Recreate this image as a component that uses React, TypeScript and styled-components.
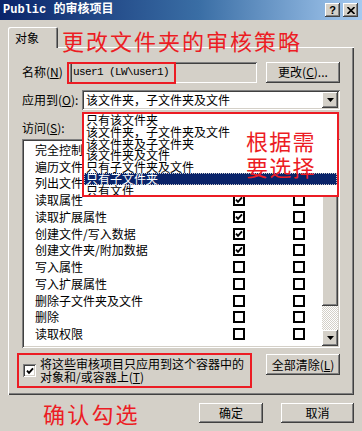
import React from "react";
import styled, { createGlobalStyle } from "styled-components";

const UI = `"Noto Sans CJK SC", "Liberation Sans", sans-serif`;
const RED = "#ec1c24";

const GlobalStyle = createGlobalStyle`
  html, body { margin: 0; padding: 0; background: #d4d0c8; }
  body {
    width: 362px; height: 431px; overflow: hidden;
    font-family: ${UI}; font-size: 12px; color: #000;
  }
`;

const Window = styled.div`
  width: 362px; height: 431px; display: flex; flex-direction: column;
  background: #d4d0c8; position: relative;
`;

const TitleBar = styled.div`
  height: 20px; flex: none; display: flex; align-items: center;
  padding: 0 4px 0 3px; box-sizing: border-box;
  background: linear-gradient(to right, #0a246a 0%, #3a6ea5 55%, #a6caf0 100%);
`;

const TitleText = styled.div`
  flex: 1; color: #fff; font-weight: bold; font-size: 12px; line-height: 20px;
  font-family: "Liberation Mono", "Noto Sans CJK SC", monospace; white-space: pre;
`;

const CaptionButtons = styled.div`
  display: flex; gap: 3px;
`;

const CaptionButton = styled.div`
  width: 15px; height: 14px; box-sizing: border-box; background: #d4d0c8;
  display: flex; align-items: center; justify-content: center;
  box-shadow: inset -1px -1px #404040, inset 1px 1px #fff, inset -2px -2px #808080;
  font-family: "Liberation Sans", sans-serif; font-weight: bold; font-size: 11px; line-height: 14px;
`;

const Body = styled.div`
  flex: 1; display: flex; flex-direction: column; padding: 7px 8px 0 8px;
`;

const TabStrip = styled.div`
  height: 20px; display: flex; align-items: flex-start; position: relative; z-index: 2;
`;

const Tab = styled.div`
  width: 50px; height: 21px; box-sizing: border-box; background: #d4d0c8;
  padding: 4px 0 0 7px; line-height: 14px;
  box-shadow: inset 1px 1px #fff, inset -1px 0 #404040, inset -2px 0 #808080;
  border-top-left-radius: 2px; border-top-right-radius: 2px;
`;

const Annotation = styled.div<{ $size?: number; $spacing?: number }>`
  color: ${RED}; font-family: ${UI}; font-weight: 400;
  font-size: ${(p) => p.$size ?? 22}px; letter-spacing: ${(p) => p.$spacing ?? 2}px;
  white-space: nowrap; pointer-events: none;
`;

const TitleNote = styled(Annotation)`
  position: absolute; left: 54px; top: 2px; line-height: 22px; z-index: 20;
`;

const ListNote = styled(Annotation)`
  position: absolute; left: 162px; top: 13px; line-height: 26px; z-index: 20;
`;

const FooterNote = styled(Annotation)`
  line-height: 22px; margin: -1px 0 0 35px;
`;

const Panel = styled.div`
  width: 346px; height: 348px; box-sizing: border-box; position: relative; z-index: 1;
  padding: 14px 14px 0 14px; display: flex; flex-direction: column;
  box-shadow: inset 1px 1px #fff, inset -1px -1px #404040, inset -2px -2px #808080;
`;

const Row = styled.div<{ $h: number; $mt?: number }>`
  height: ${(p) => p.$h}px; margin-top: ${(p) => p.$mt ?? 0}px;
  display: flex; align-items: center;
`;

const Label = styled.div<{ $w?: number }>`
  width: ${(p) => (p.$w ? `${p.$w}px` : "auto")}; flex: none; line-height: 14px; white-space: nowrap;
`;

const sunken = `
  box-shadow: inset 1px 1px #808080, inset -1px -1px #fff, inset 2px 2px #404040, inset -2px -2px #d4d0c8;
`;

const TextBox = styled.div`
  width: 187px; height: 21px; box-sizing: border-box; position: relative; background: #d4d0c8;
  ${sunken}
  padding: 0 0 0 3px; display: flex; align-items: center;
  font-family: "Liberation Mono", monospace; font-size: 11px; letter-spacing: -0.6px; white-space: pre;
`;

const RedFrame = styled.div<{ $l: number; $t: number; $w: number; $h: number }>`
  position: absolute; left: ${(p) => p.$l}px; top: ${(p) => p.$t}px;
  width: ${(p) => p.$w}px; height: ${(p) => p.$h}px; box-sizing: border-box;
  border: 2px solid ${RED}; pointer-events: none;
`;

const Button = styled.div<{ $w: number; $h?: number }>`
  width: ${(p) => p.$w}px; height: ${(p) => p.$h ?? 21}px; box-sizing: border-box; flex: none;
  background: #d4d0c8; display: flex; align-items: center; justify-content: center;
  box-shadow: inset -1px -1px #404040, inset 1px 1px #fff, inset -2px -2px #808080;
  white-space: nowrap; line-height: 14px;
`;

const ComboWrap = styled.div`
  position: relative; width: 258px; height: 20px;
`;

const Combo = styled.div`
  width: 100%; height: 100%; box-sizing: border-box; background: #fff; ${sunken}
  display: flex; align-items: center; padding: 0 2px 0 4px; white-space: nowrap;
`;

const ComboText = styled.div`
  flex: 1; line-height: 14px;
`;

const ArrowButton = styled.div`
  width: 16px; height: 16px; box-sizing: border-box; background: #d4d0c8;
  box-shadow: inset -1px -1px #404040, inset 1px 1px #fff, inset -2px -2px #808080;
  display: flex; align-items: center; justify-content: center;
`;

const DropList = styled.div`
  position: absolute; left: 0; top: 22px; width: 257px; height: 85px; box-sizing: border-box;
  background: #fff; border: 2px solid ${RED}; overflow: hidden; z-index: 10;
`;

const DropItem = styled.div<{ $sel?: boolean }>`
  height: 11.8px; line-height: 11.8px; padding-left: 2px; white-space: nowrap;
  background: ${(p) => (p.$sel ? "#0a246a" : "transparent")};
  color: ${(p) => (p.$sel ? "#fff" : "#000")};
  outline: ${(p) => (p.$sel ? "1px dotted #c8c8c8" : "none")}; outline-offset: -1px;
`;

const ListBox = styled.div`
  width: 318px; height: 209px; box-sizing: border-box; margin-top: 4px; padding: 2px;
  background: #fff; ${sunken} display: flex;
`;

const Rows = styled.div`
  flex: 1; padding: 0.6px 0 0 11px; overflow: hidden;
`;

const PermRow = styled.div`
  height: 16.75px; display: grid; grid-template-columns: 198px 12px 48px 12px;
  align-items: center; white-space: nowrap;
`;

const PermName = styled.div`
  line-height: 14px;
`;

const FlatCheck = styled.div`
  width: 12px; height: 12px; box-sizing: border-box; border: 2px solid #000; background: #fff;
  display: flex; align-items: center; justify-content: center;
`;

const ScrollBar = styled.div`
  width: 16px; flex: none; display: flex; flex-direction: column;
`;

const ScrollButton = styled.div`
  height: 16px; flex: none; box-sizing: border-box; background: #d4d0c8;
  box-shadow: inset -1px -1px #404040, inset 1px 1px #fff, inset -2px -2px #808080;
  display: flex; align-items: center; justify-content: center;
`;

const Thumb = styled.div`
  height: 149px; flex: none; box-sizing: border-box; background: #d4d0c8;
  box-shadow: inset -1px -1px #404040, inset 1px 1px #fff, inset -2px -2px #808080;
`;

const Track = styled.div`
  flex: 1;
  background: repeating-conic-gradient(#fff 0 25%, #d4d0c8 0 50%) 0 0 / 2px 2px;
`;

const BottomRow = styled.div`
  margin-top: 5px; height: 35px; display: flex; align-items: flex-start;
`;

const CheckArea = styled.div`
  margin-left: -5px; width: 235px; height: 35px; box-sizing: border-box;
  border: 2px solid ${RED}; display: flex; align-items: center; gap: 4px; padding-left: 4px;
`;

const ClassicCheck = styled.div`
  width: 13px; height: 13px; flex: none; box-sizing: border-box; background: #fff; ${sunken}
  display: flex; align-items: center; justify-content: center;
`;

const CheckLabel = styled.div`
  line-height: 13.5px; margin-top: -1px;
`;

const Footer = styled.div`
  flex: 1; display: flex; align-items: flex-start; padding-top: 8px;
`;

const FooterButtons = styled.div`
  margin-left: auto; display: flex; gap: 18px;
`;

const Check = () => (
  <svg width="8" height="8" viewBox="0 0 8 8">
    <polyline points="1,3.6 3,5.8 7,1.4" fill="none" stroke="#000" strokeWidth="1.9" />
  </svg>
);

const DownArrow = () => (
  <svg width="7" height="4" viewBox="0 0 7 4">
    <polygon points="0,0 7,0 3.5,4" fill="#000" />
  </svg>
);

const perms: [string, boolean][] = [
  ["完全控制", false],
  ["遍历文件夹/运行文件", true],
  ["列出文件夹/读取数据", true],
  ["读取属性", true],
  ["读取扩展属性", true],
  ["创建文件/写入数据", true],
  ["创建文件夹/附加数据", true],
  ["写入属性", false],
  ["写入扩展属性", false],
  ["删除子文件夹及文件", false],
  ["删除", false],
  ["读取权限", false],
];

const options = [
  "只有该文件夹",
  "该文件夹，子文件夹及文件",
  "该文件夹及子文件夹",
  "该文件夹及文件",
  "只有子文件夹及文件",
  "只有子文件夹",
  "只有文件",
];

export default function App() {
  return (
    <>
      <GlobalStyle />
      <Window>
        <TitleBar>
          <TitleText>Public 的审核项目</TitleText>
          <CaptionButtons>
            <CaptionButton>?</CaptionButton>
            <CaptionButton>
              <svg width="8" height="7" viewBox="0 0 8 7">
                <path d="M0.5 0 L7.5 7 M7.5 0 L0.5 7" stroke="#000" strokeWidth="1.6" />
              </svg>
            </CaptionButton>
          </CaptionButtons>
        </TitleBar>
        <Body>
          <TabStrip>
            <Tab>对象</Tab>
            <TitleNote>更改文件夹的审核策略</TitleNote>
          </TabStrip>
          <Panel>
            <Row $h={22}>
              <Label $w={48}>
                名称(<u>N</u>)
              </Label>
              <TextBox>
                user1 (LW\user1)
                <RedFrame $l={-3} $t={0} $w={109} $h={22} />
              </TextBox>
              <Button $w={74} style={{ marginLeft: "auto" }}>
                更改(<u>C</u>)...
              </Button>
            </Row>
            <Row $h={20} $mt={7}>
              <Label $w={60}>
                应用到(<u>O</u>):
              </Label>
              <ComboWrap>
                <Combo>
                  <ComboText>该文件夹，子文件夹及文件</ComboText>
                  <ArrowButton>
                    <DownArrow />
                  </ArrowButton>
                </Combo>
                <DropList>
                  {options.map((o, i) => (
                    <DropItem key={o} $sel={i === 5}>
                      {o}
                    </DropItem>
                  ))}
                  <ListNote $spacing={1.3}>
                    根据需
                    <br />
                    要选择
                  </ListNote>
                </DropList>
              </ComboWrap>
            </Row>
            <Row $h={14} $mt={11}>
              <Label>
                访问(<u>S</u>):
              </Label>
            </Row>
            <ListBox>
              <Rows>
                {perms.map(([name, on]) => (
                  <PermRow key={name}>
                    <PermName>{name}</PermName>
                    <FlatCheck>{on && <Check />}</FlatCheck>
                    <span />
                    <FlatCheck />
                  </PermRow>
                ))}
              </Rows>
              <ScrollBar>
                <ScrollButton>
                  <svg width="7" height="4" viewBox="0 0 7 4">
                    <polygon points="0,4 7,4 3.5,0" fill="#000" />
                  </svg>
                </ScrollButton>
                <Thumb />
                <Track />
                <ScrollButton>
                  <DownArrow />
                </ScrollButton>
              </ScrollBar>
            </ListBox>
            <BottomRow>
              <CheckArea>
                <ClassicCheck>
                  <Check />
                </ClassicCheck>
                <CheckLabel>
                  将这些审核项目只应用到这个容器中的
                  <br />
                  对象和/或容器上(<u>T</u>)
                </CheckLabel>
              </CheckArea>
              <Button $w={74} style={{ marginLeft: "auto", marginTop: 1 }}>
                全部清除(<u>L</u>)
              </Button>
            </BottomRow>
          </Panel>
          <Footer>
            <FooterNote $spacing={2.2}>确认勾选</FooterNote>
            <FooterButtons>
              <Button $w={64} $h={20}>
                确定
              </Button>
              <Button $w={73} $h={20}>
                取消
              </Button>
            </FooterButtons>
          </Footer>
        </Body>
      </Window>
    </>
  );
}
